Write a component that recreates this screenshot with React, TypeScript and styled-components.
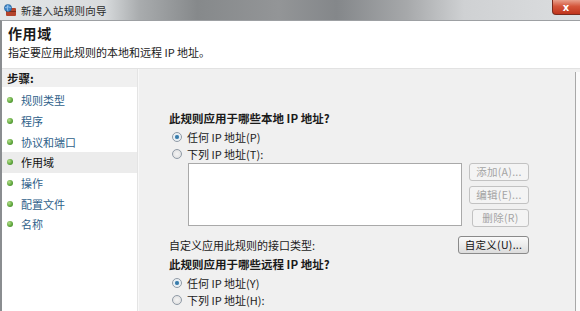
import React from 'react';
import styled, { createGlobalStyle } from 'styled-components';

const GlobalStyle = createGlobalStyle`
  html, body {
    margin: 0;
    padding: 0;
    overflow: hidden;
    background: #f0f0f0;
  }
  * { box-sizing: border-box; }
`;

const FONT = `"Noto Sans CJK SC", "Noto Sans", "Liberation Sans", sans-serif`;

const Window = styled.div`
  width: 580px;
  height: 311px;
  display: flex;
  flex-direction: column;
  font-family: ${FONT};
  color: #1a1a1a;
  overflow: hidden;
`;

const TitleBar = styled.div`
  height: 20px;
  display: flex;
  align-items: center;
  gap: 4px;
  padding-left: 3px;
  background: linear-gradient(
    90deg,
    #e3e6e8 0%,
    #d8dbdd 18%,
    #a9acae 24%,
    #86898b 34%,
    #939597 48%,
    #84878a 58%,
    #a6a8aa 70%,
    #cfd1d3 80%,
    #dcdee0 100%
  );
  position: relative;
`;

const TitleText = styled.span`
  font-size: 10.5px;
  color: #2a2a2a;
  letter-spacing: 0.2px;
`;

const CloseButton = styled.div`
  position: absolute;
  right: -6px;
  top: 0;
  width: 34px;
  height: 15px;
  border-radius: 0 0 4px 4px;
  background: linear-gradient(180deg, #e8a08c 0%, #d4563b 45%, #c0341c 100%);
  border: 1px solid #7a2a1c;
  border-top: none;
  display: flex;
  align-items: center;
  justify-content: center;
  padding-right: 6px;
  color: #fff;
  font-family: "DejaVu Sans", sans-serif;
  font-weight: bold;
  font-size: 10px;
`;

const Frame = styled.div`
  flex: 1;
  display: flex;
  flex-direction: column;
  border-left: 2px solid #8a8d90;
  border-top: 1px solid #9da0a3;
  min-height: 0;
`;

const Header = styled.div`
  height: 48px;
  background: #ffffff;
  padding: 2px 0 0 6px;
  border-bottom: 1px solid #e2e2e2;
`;

const PageTitle = styled.div`
  font-size: 14px;
  font-weight: bold;
  line-height: 20px;
  letter-spacing: 0.6px;
`;

const PageSubtitle = styled.div`
  font-size: 11px;
  line-height: 18px;
`;

const Body = styled.div`
  flex: 1;
  display: flex;
  min-height: 0;
`;

const StepsPane = styled.div`
  width: 136px;
  background: #ffffff;
  display: flex;
  flex-direction: column;
  border-right: 1px solid #e4e4e4;
`;

const StepsHeader = styled.div`
  height: 18px;
  background: #f0f0f0;
  font-size: 11.5px;
  font-weight: bold;
  line-height: 18px;
  padding-left: 5px;
  margin-bottom: 3px;
`;

const StepItem = styled.div<{ $active?: boolean }>`
  height: 20.7px;
  display: flex;
  align-items: center;
  gap: 8px;
  padding-left: 5px;
  font-size: 11px;
  color: ${({ $active }) => ($active ? '#111' : '#2f5f8a')};
  background: ${({ $active }) => ($active ? '#ececec' : 'transparent')};
`;

const Bullet = styled.span`
  width: 6px;
  height: 6px;
  border-radius: 50%;
  background: radial-gradient(circle at 35% 35%, #b6e08a 0%, #5aa33a 60%, #3b7a22 100%);
  flex-shrink: 0;
`;

const Content = styled.div`
  flex: 1;
  background: #f0f0f0;
  padding: 41px 0 0 30px;
  border-left: 1px solid #f8f8f8;
  display: flex;
  flex-direction: column;
`;

const Column = styled.div`
  width: 360px;
  display: flex;
  flex-direction: column;
`;

const Question = styled.div`
  font-size: 11.5px;
  font-weight: bold;
  line-height: 16px;
`;

const RadioRow = styled.label`
  display: flex;
  align-items: center;
  gap: 5px;
  height: 17px;
  font-size: 11px;
  padding-left: 3px;
`;

const RadioDot = styled.span<{ $checked?: boolean }>`
  width: 10px;
  height: 10px;
  border-radius: 50%;
  border: 1px solid #8f9aa6;
  background: ${({ $checked }) =>
    $checked
      ? 'radial-gradient(circle, #2f6f9a 0%, #4a8ab8 30%, #e6eef4 45%, #f6f6f6 100%)'
      : 'radial-gradient(circle, #f4f4f4 0%, #dcdcdc 100%)'};
  flex-shrink: 0;
`;

const FirstRadio = styled(RadioRow)`
  margin-top: 2px;
`;

const ListArea = styled.div`
  display: flex;
  gap: 7px;
  margin: 1px 0 0 19px;
`;

const ListBox = styled.div`
  width: 274px;
  height: 63px;
  background: #ffffff;
  border: 1px solid #a9a9a9;
`;

const ButtonStack = styled.div`
  display: flex;
  flex-direction: column;
  align-items: flex-end;
  gap: 5px;
`;

const Button = styled.div<{ $disabled?: boolean; $width?: number }>`
  width: ${({ $width }) => $width ?? 60}px;
  height: 18px;
  border: 1px solid ${({ $disabled }) => ($disabled ? '#c2c2c2' : '#8a8a8a')};
  border-radius: 3px;
  background: ${({ $disabled }) =>
    $disabled ? '#f4f4f4' : 'linear-gradient(180deg, #fafafa 0%, #ececec 50%, #dcdcdc 100%)'};
  font-size: 10.5px;
  color: ${({ $disabled }) => ($disabled ? '#a4a4a4' : '#111')};
  display: flex;
  align-items: center;
  justify-content: center;
  line-height: 1;
  letter-spacing: 0.3px;
`;

const InterfaceRow = styled.div`
  display: flex;
  align-items: center;
  justify-content: space-between;
  margin-top: 9px;
  height: 18px;
`;

const PlainText = styled.span`
  font-size: 11px;
`;

const SecondQuestion = styled(Question)`
  margin-top: 2px;
`;

const RightEdge = styled.div`
  width: 5px;
  background: #fafafa;
  border-left: 1px solid #a8a8a8;
  margin-top: 3px;
`;

const WindowIcon = () => (
  <svg width="14" height="14" viewBox="0 0 14 14">
    <rect x="3" y="5" width="10" height="8" rx="1" fill="#b4442c" />
    <rect x="3" y="8" width="10" height="1" fill="#7a2a18" />
    <rect x="7" y="5" width="1" height="3" fill="#7a2a18" />
    <circle cx="5" cy="5" r="3.6" fill="#3f86c8" stroke="#1f5a90" strokeWidth="0.6" />
    <path d="M2.2 4.6 Q5 3 7.8 4.6 M5 1.5 Q3.5 5 5 8.5" stroke="#bfe0ff" strokeWidth="0.6" fill="none" />
  </svg>
);

const steps = ['规则类型', '程序', '协议和端口', '作用域', '操作', '配置文件', '名称'];

export default function App() {
  return (
    <>
      <GlobalStyle />
      <Window>
        <TitleBar>
          <WindowIcon />
          <TitleText>新建入站规则向导</TitleText>
          <CloseButton>x</CloseButton>
        </TitleBar>
        <Frame>
          <Header>
            <PageTitle>作用域</PageTitle>
            <PageSubtitle>指定要应用此规则的本地和远程 IP 地址。</PageSubtitle>
          </Header>
          <Body>
            <StepsPane>
              <StepsHeader>步骤:</StepsHeader>
              {steps.map((s) => (
                <StepItem key={s} $active={s === '作用域'}>
                  <Bullet />
                  {s}
                </StepItem>
              ))}
            </StepsPane>
            <Content>
              <Column>
                <Question>此规则应用于哪些本地 IP 地址?</Question>
                <FirstRadio>
                  <RadioDot $checked />
                  任何 IP 地址(P)
                </FirstRadio>
                <RadioRow>
                  <RadioDot />
                  下列 IP 地址(T):
                </RadioRow>
                <ListArea>
                  <ListBox />
                  <ButtonStack>
                    <Button $disabled>添加(A)...</Button>
                    <Button $disabled>编辑(E)...</Button>
                    <Button $disabled $width={57}>删除(R)</Button>
                  </ButtonStack>
                </ListArea>
                <InterfaceRow>
                  <PlainText>自定义应用此规则的接口类型:</PlainText>
                  <Button $width={71}>自定义(U)...</Button>
                </InterfaceRow>
                <SecondQuestion>此规则应用于哪些远程 IP 地址?</SecondQuestion>
                <FirstRadio>
                  <RadioDot $checked />
                  任何 IP 地址(Y)
                </FirstRadio>
                <RadioRow>
                  <RadioDot />
                  下列 IP 地址(H):
                </RadioRow>
              </Column>
            </Content>
            <RightEdge />
          </Body>
        </Frame>
      </Window>
    </>
  );
}
